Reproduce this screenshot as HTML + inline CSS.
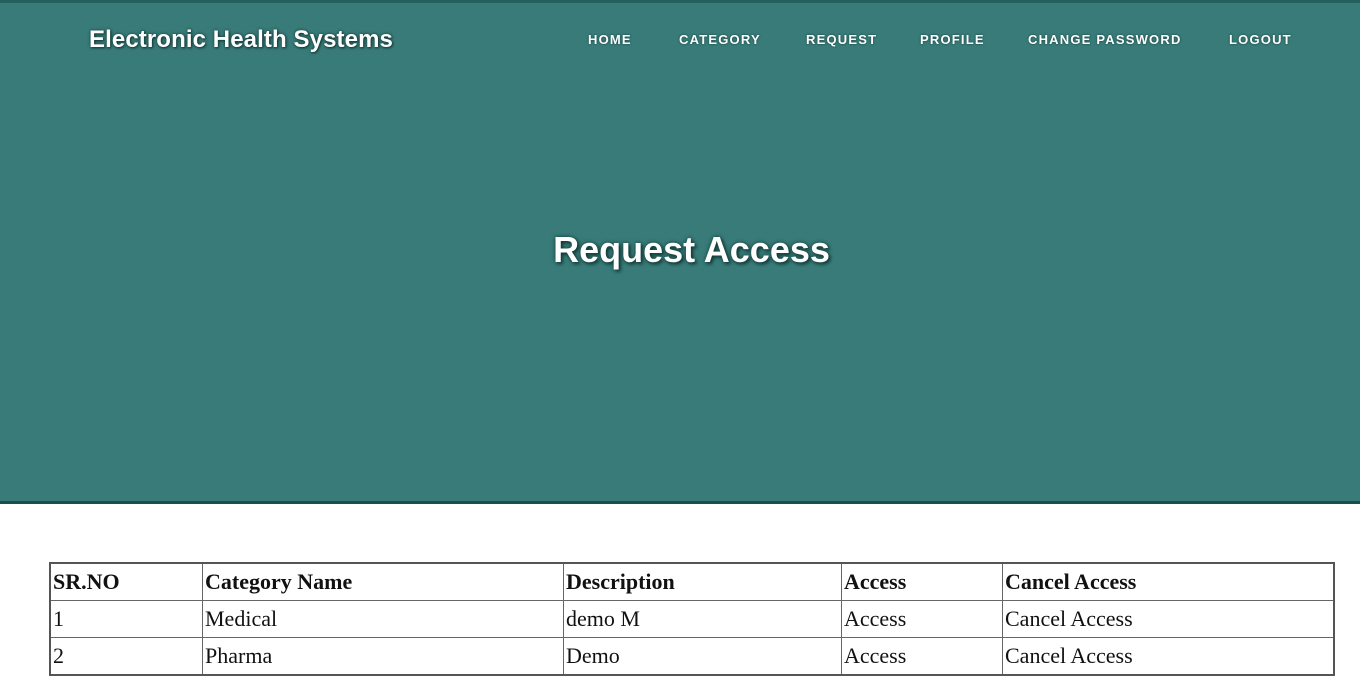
<!DOCTYPE html>
<html><head><style>
body{margin:0;width:1360px;height:693px;background:#fff;overflow:hidden;font-family:"Liberation Sans",sans-serif}
.hdr{position:absolute;left:0;top:0;width:1360px;height:504px;background:#387b78;border-top:3px solid #24605c;border-bottom:3px solid #1b4f4b;box-sizing:border-box}
.logo{position:absolute;left:89px;top:23px;color:#fff;font-weight:bold;font-size:24px;text-shadow:0 0 3px #143c3a,1px 1px 2px #143c3a;letter-spacing:0.1px}
.nav{position:absolute;top:29px;color:#fff;font-weight:bold;font-size:13px;text-shadow:0 0 2px #143c3a;letter-spacing:1.2px}
h1{position:absolute;left:0;width:1383px;text-align:center;top:226px;margin:0;color:#fff;font-size:36px;text-shadow:0 0 4px #143c3a,2px 2px 3px #143c3a}
table{position:absolute;left:49px;top:562px;width:1286px;border-collapse:collapse;border:2px solid #555;font-family:"Liberation Serif",serif;font-size:22px;color:#111}
td{border:1px solid #666;height:36px;padding:0 2px;vertical-align:middle}
tr:first-child td{font-weight:bold}
</style></head><body>
<div class="hdr">
<div class="logo">Electronic Health Systems</div>
<div class="nav" style="left:588px">HOME</div>
<div class="nav" style="left:679px">CATEGORY</div>
<div class="nav" style="left:806px">REQUEST</div>
<div class="nav" style="left:920px">PROFILE</div>
<div class="nav" style="left:1028px">CHANGE PASSWORD</div>
<div class="nav" style="left:1229px">LOGOUT</div>
<h1>Request Access</h1>
</div>
<table>
<tr><td style="width:147px">SR.NO</td><td style="width:356px">Category Name</td><td style="width:273px">Description</td><td style="width:156px">Access</td><td>Cancel Access</td></tr>
<tr><td>1</td><td>Medical</td><td>demo M</td><td>Access</td><td>Cancel Access</td></tr>
<tr><td>2</td><td>Pharma</td><td>Demo</td><td>Access</td><td>Cancel Access</td></tr>
</table>
</body></html>
